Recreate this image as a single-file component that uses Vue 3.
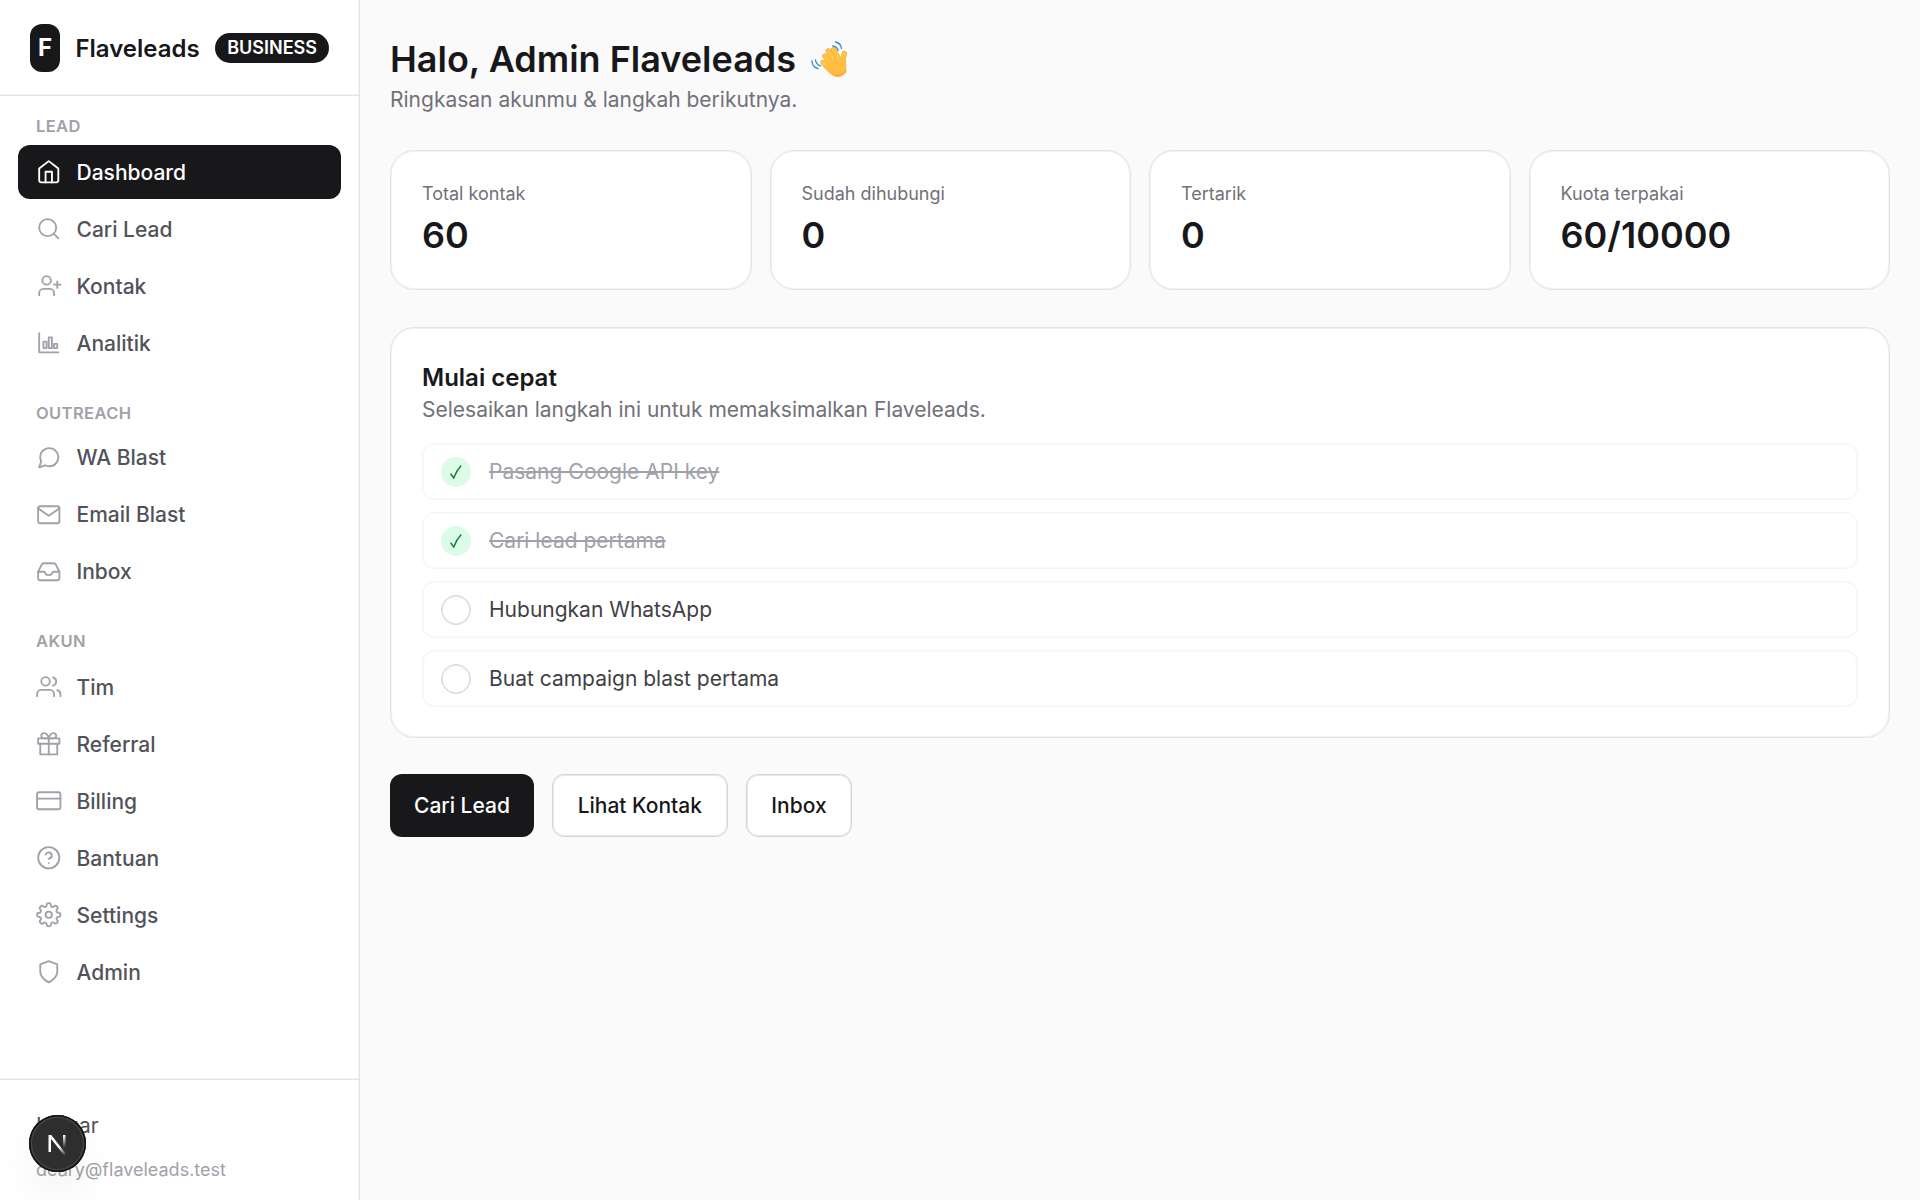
<template>
  <div class="layout">
    <aside class="sidebar">
      <div class="brand">
        <span class="logo">F</span>
        <span class="brandName">Flaveleads</span>
        <span class="plan">BUSINESS</span>
      </div>

      <nav class="nav">
        <div v-for="group in groups" :key="group.label" class="group" :class="group.label.toLowerCase()">
          <p class="groupLabel">{{ group.label }}</p>
          <a v-for="item in group.items" :key="item.name" class="item" :class="{ active: item.name === current }">
            <svg class="icon" viewBox="0 0 24 24">
              <path v-for="d in item.icon" :key="d" :d="d" />
            </svg>
            <span class="itemName">{{ item.name }}</span>
          </a>
        </div>
      </nav>

      <div class="account">
        <span class="logout">Keluar</span>
        <span class="email">deary@flaveleads.test</span>
      </div>
    </aside>

    <main class="main">
      <h1 class="title">
        <span>Halo, Admin Flaveleads</span>
        <svg class="wave" viewBox="0 0 36 36">
          <g v-for="f in fingers" :key="f" class="finger">
            <path :d="f" class="fingerEdge" />
            <path :d="f" />
          </g>
          <path d="M17 23.500C20 18 27 15.500 30 17.500L35 14.500C34.600 17 35.200 19 35.200 22V31C33 34 30 35.700 26.500 35.700C22 35.700 18 32 13.500 26.500z" fill="#ffbe42" />
          <path d="M18 31C22 35 29 35.500 35.200 28V31C33 34 30 35.700 26.500 35.700C23.500 35.700 20.500 34 18 31z" fill="#fbab3e" />
          <path d="M21.500 4.800C24 5 26.300 6.800 27.200 9.500M24.500 1C27.700 1.600 30 4 30.500 7.300M4.500 19C4.800 21.800 6.600 24 9.500 24.800M1 20C1.200 23.800 3.600 26.800 7 27.600" stroke="#2f88cc" stroke-width="1.300" stroke-linecap="round" fill="none" />
        </svg>
      </h1>
      <p class="subtitle">Ringkasan akunmu &amp; langkah berikutnya.</p>

      <div class="stats">
        <div v-for="stat in stats" :key="stat.label" class="card">
          <p class="statLabel">{{ stat.label }}</p>
          <p class="statValue">{{ stat.value }}</p>
        </div>
      </div>

      <section class="card quick">
        <h2 class="quickTitle">Mulai cepat</h2>
        <p class="quickText">Selesaikan langkah ini untuk memaksimalkan Flaveleads.</p>
        <ul class="steps">
          <li v-for="step in steps" :key="step.text" class="step" :class="{ done: step.done }">
            <span class="check">
              <svg v-if="step.done" viewBox="0 0 14 16">
                <path d="M1.600 9.800L4.700 13.900C6.500 9.300 9 5 12.200 1.600" />
              </svg>
            </span>
            <span class="stepText">{{ step.text }}</span>
          </li>
        </ul>
      </section>

      <div class="actions">
        <button class="primary">Cari Lead</button>
        <button>Lihat Kontak</button>
        <button>Inbox</button>
      </div>
    </main>

    <div class="devBadge">
      <svg viewBox="0 0 57 57">
        <defs>
          <linearGradient id="diag" x1="31" y1="31" x2="37.500" y2="40" gradientUnits="userSpaceOnUse">
            <stop stop-color="#fff" />
            <stop offset="1" stop-color="#fff" stop-opacity="0" />
          </linearGradient>
          <linearGradient id="stem" x1="0" y1="20" x2="0" y2="33" gradientUnits="userSpaceOnUse">
            <stop stop-color="#fff" />
            <stop offset="1" stop-color="#fff" stop-opacity="0" />
          </linearGradient>
        </defs>
        <path d="M19.500 20h2.800L37.300 39.300 35.400 40.800 22 23.800V37h-2.500z" fill="url(#diag)" />
        <path d="M34 20h2.500v13.500H34z" fill="url(#stem)" />
      </svg>
    </div>
  </div>
</template>

<script setup>
  import { ref } from "vue";

  const current = ref("Dashboard");

  const groups = [
    {
      label: "LEAD",
      items: [
        { name: "Dashboard", icon: ["M3 9l9-7 9 7v11a2 2 0 0 1-2 2H5a2 2 0 0 1-2-2z", "M9 22V12h6v10"] },
        { name: "Cari Lead", icon: ["M11 3a8 8 0 1 0 0 16 8 8 0 0 0 0-16z", "M21 21l-4.350-4.350"] },
        { name: "Kontak", icon: ["M17 21v-2a4 4 0 0 0-4-4H7a4 4 0 0 0-4 4v2", "M10 3a4 4 0 1 0 0 8 4 4 0 0 0 0-8z", "M20 8v6M23 11h-6"] },
        { name: "Analitik", icon: ["M3 3v18h18", "M7 11h3v6H7z", "M12 7h3v10h-3z", "M17 13h3v4h-3z"] },
      ],
    },
    {
      label: "OUTREACH",
      items: [
        { name: "WA Blast", icon: ["M21 11.500a8.380 8.380 0 0 1-.9 3.800 8.500 8.500 0 0 1-7.600 4.700 8.380 8.380 0 0 1-3.800-.9L3 21l1.900-5.700a8.380 8.380 0 0 1-.9-3.800 8.500 8.500 0 0 1 4.700-7.600 8.380 8.380 0 0 1 3.800-.9h.5a8.480 8.480 0 0 1 8 8v.5z"] },
        { name: "Email Blast", icon: ["M4 4h16a2 2 0 0 1 2 2v12a2 2 0 0 1-2 2H4a2 2 0 0 1-2-2V6a2 2 0 0 1 2-2z", "M22 6l-10 7L2 6"] },
        { name: "Inbox", icon: ["M22 12h-6l-2 3h-4l-2-3H2", "M5.450 5.110L2 12v6a2 2 0 0 0 2 2h16a2 2 0 0 0 2-2v-6l-3.450-6.890A2 2 0 0 0 16.760 4H7.240a2 2 0 0 0-1.790 1.110z"] },
      ],
    },
    {
      label: "AKUN",
      items: [
        { name: "Tim", icon: ["M17 21v-2a4 4 0 0 0-4-4H5a4 4 0 0 0-4 4v2", "M9 3a4 4 0 1 0 0 8 4 4 0 0 0 0-8z", "M23 21v-2a4 4 0 0 0-3-3.870", "M16 3.130a4 4 0 0 1 0 7.750"] },
        { name: "Referral", icon: ["M20 12v10H4V12", "M2 7h20v5H2z", "M12 22V7", "M12 7H7.500a2.500 2.500 0 0 1 0-5C11 2 12 7 12 7z", "M12 7h4.500a2.500 2.500 0 0 0 0-5C13 2 12 7 12 7z"] },
        { name: "Billing", icon: ["M3 4h18a2 2 0 0 1 2 2v12a2 2 0 0 1-2 2H3a2 2 0 0 1-2-2V6a2 2 0 0 1 2-2z", "M1 10h22"] },
        { name: "Bantuan", icon: ["M12 2a10 10 0 1 0 0 20 10 10 0 0 0 0-20z", "M9.090 9a3 3 0 0 1 5.830 1c0 2-3 3-3 3", "M12 17h.01"] },
        { name: "Settings", icon: ["M12 9a3 3 0 1 0 0 6 3 3 0 0 0 0-6z", "M19.400 15a1.650 1.650 0 0 0 .33 1.820l.06.06a2 2 0 0 1-2.830 2.830l-.06-.06a1.650 1.650 0 0 0-1.820-.33 1.650 1.650 0 0 0-1 1.510V21a2 2 0 0 1-4 0v-.09A1.650 1.650 0 0 0 9 19.400a1.650 1.650 0 0 0-1.820.33l-.06.06a2 2 0 0 1-2.830-2.830l.06-.06a1.650 1.650 0 0 0 .33-1.820 1.650 1.650 0 0 0-1.510-1H3a2 2 0 0 1 0-4h.09A1.650 1.650 0 0 0 4.600 9a1.650 1.650 0 0 0-.33-1.820l-.06-.06a2 2 0 0 1 2.830-2.830l.06.06a1.650 1.650 0 0 0 1.820.33H9a1.650 1.650 0 0 0 1-1.510V3a2 2 0 0 1 4 0v.09a1.650 1.650 0 0 0 1 1.510 1.650 1.650 0 0 0 1.820-.33l.06-.06a2 2 0 0 1 2.830 2.830l-.06.06a1.650 1.650 0 0 0-.33 1.820V9a1.650 1.650 0 0 0 1.510 1H21a2 2 0 0 1 0 4h-.09a1.650 1.650 0 0 0-1.510 1z"] },
        { name: "Admin", icon: ["M12 22s8-4 8-10V5l-8-3-8 3v7c0 6 8 10 8 10z"] },
      ],
    },
  ];

  // waving hand, thumb first
  const fingers = [
    "M33.300 12.500L31.500 22",
    "M22.500 8.700L29 20",
    "M17.300 10L25 22",
    "M14 15L21.500 25",
    "M12 21.500L20 30",
  ];

  const stats = [
    { label: "Total kontak", value: "60" },
    { label: "Sudah dihubungi", value: "0" },
    { label: "Tertarik", value: "0" },
    { label: "Kuota terpakai", value: "60/10000" },
  ];

  const steps = [
    { text: "Pasang Google API key", done: true },
    { text: "Cari lead pertama", done: true },
    { text: "Hubungkan WhatsApp", done: false },
    { text: "Buat campaign blast pertama", done: false },
  ];
</script>

<style>
  body {
    margin: 0;
    background: #fafafa;
  }
</style>

<style scoped>
  .layout {
    display: flex;
    height: 1200px;
    overflow: hidden;
    background: #fafafa;
    color: #18181b;
    font-family: Inter, "Liberation Sans", sans-serif;
    font-size: 21px;
    line-height: 30px;
  }

  .layout * {
    box-sizing: border-box;
  }

  h1, h2, p, ul {
    margin: 0;
    padding: 0;
  }

  .sidebar {
    display: flex;
    flex-direction: column;
    flex: none;
    width: 360px;
    background: #fff;
    border-right: 1px solid #e4e4e7;
    box-shadow: inset -1px 0 #f1f1f3;
  }

  .brand {
    display: flex;
    align-items: center;
    gap: 15.5px;
    height: 96px;
    padding: 1px 30px 0;
    border-bottom: 1px solid #e4e4e7;
    box-shadow: inset 0 -1px #f1f1f3;
  }

  .logo {
    width: 30px;
    height: 48px;
    border-radius: 12px;
    background: #18181b;
    color: #fff;
    font-size: 24px;
    font-weight: 700;
    line-height: 48px;
    text-align: center;
  }

  .brandName {
    padding-top: 1px;
    font-size: 24px;
    font-weight: 600;
  }

  .plan {
    height: 30px;
    padding: 0 12px;
    border-radius: 15px;
    background: #18181b;
    color: #fff;
    font-size: 18px;
    font-weight: 600;
    line-height: 30px;
  }

  .nav {
    flex: 1;
    padding: 18px 18px 0;
  }

  .group {
    display: flex;
    flex-direction: column;
    gap: 3px;
    margin-bottom: 31px;
  }

  .groupLabel {
    height: 28px;
    padding-left: 18px;
    color: #a1a1aa;
    font-size: 16.5px;
    font-weight: 600;
    line-height: 24px;
    letter-spacing: 0.4px;
  }

  .item {
    display: flex;
    align-items: center;
    gap: 15px;
    height: 54px;
    padding: 0 18px;
    border-radius: 12px;
    color: #52525b;
    font-weight: 500;
  }

  .itemName {
    padding-top: 2px;
  }

  .active {
    background: #18181b;
    color: #fff;
  }

  .outreach {
    margin-bottom: 30px;
  }

  .outreach .groupLabel {
    height: 27px;
  }

  .outreach .itemName {
    padding-top: 0;
  }

  .icon {
    width: 25.5px;
    height: 25.5px;
    fill: none;
    stroke: #a1a1aa;
    stroke-width: 1.75;
    stroke-linecap: round;
    stroke-linejoin: round;
  }

  .active .icon {
    stroke: #fff;
  }

  .account {
    display: flex;
    flex-direction: column;
    height: 121px;
    padding: 31px 36px 0;
    border-top: 1px solid #e4e4e7;
    box-shadow: 0 -1px #f1f1f3;
  }

  .logout {
    color: #52525b;
  }

  .email {
    margin-top: 17px;
    color: #a1a1aa;
    font-size: 18px;
    line-height: 24px;
  }

  .main {
    flex: 1;
    padding: 35px 30px;
  }

  .title {
    display: flex;
    align-items: center;
    gap: 15px;
    height: 48px;
    font-size: 36px;
    font-weight: 600;
    line-height: 48px;
  }

  .wave {
    width: 36px;
    height: 36px;
  }

  .finger {
    fill: none;
    stroke: #ffc544;
    stroke-width: 4.2;
    stroke-linecap: round;
  }

  .fingerEdge {
    stroke: #eda234;
    stroke-width: 5.2;
  }

  .subtitle, .quickText {
    color: #71717a;
  }

  .subtitle {
    margin-top: 2px;
  }

  .stats {
    display: grid;
    grid-template-columns: repeat(4, 1fr);
    gap: 18px;
    margin-top: 35px;
  }

  .card {
    padding: 31px 31px 30px;
    border: 1px solid #e4e4e7;
    border-radius: 24px;
    background: #fff;
    box-shadow: inset 0 0 0 1px #f1f1f3;
  }

  .statLabel {
    color: #71717a;
    font-size: 18px;
    line-height: 24px;
  }

  .statValue {
    margin-top: 5px;
    font-size: 36px;
    font-weight: 600;
    line-height: 48px;
  }

  .quick {
    margin-top: 37px;
    padding-top: 33px;
  }

  .quickTitle {
    font-size: 24px;
    font-weight: 600;
    line-height: 34px;
  }

  .steps {
    display: flex;
    flex-direction: column;
    gap: 12px;
    margin-top: 18px;
    list-style: none;
  }

  .step {
    display: flex;
    align-items: center;
    gap: 18px;
    height: 57px;
    padding: 0 18px;
    border: 1px solid #f4f4f5;
    border-radius: 12px;
    box-shadow: inset 0 0 0 1px #fafafa;
    color: #3f3f46;
  }

  .check {
    display: flex;
    align-items: center;
    justify-content: center;
    width: 30px;
    height: 30px;
    border: 1px solid #d4d4d8;
    border-radius: 50%;
    box-shadow: inset 0 0 0 1px #eaeaec;
  }

  .done .check {
    border: none;
    background: #dcfce7;
    box-shadow: none;
  }

  .check svg {
    width: 14px;
    height: 16px;
    fill: none;
    stroke: #15803d;
    stroke-width: 1.5;
  }

  .done .stepText {
    color: #a1a1aa;
    text-decoration: line-through;
  }

  .actions {
    display: flex;
    gap: 18px;
    margin-top: 36px;
  }

  button {
    height: 63px;
    padding: 0 24.7px;
    border: 1px solid #d4d4d8;
    border-radius: 12px;
    background: #fff;
    box-shadow: inset 0 0 0 1px #eaeaec;
    color: #18181b;
    font: inherit;
    font-weight: 500;
  }

  .primary {
    padding: 0 24px;
    border: none;
    background: #18181b;
    box-shadow: none;
    color: #fff;
  }

  /* floats over the account block */
  .devBadge {
    position: absolute;
    left: 28.5px;
    top: 1114.5px;
    width: 57px;
    height: 57px;
    border-radius: 50%;
    background: #2e2e2e;
    box-shadow: inset 0 0 0 1.5px #111, inset 0 0 0 3px #444, 0 24px 48px -12px rgba(0, 0, 0, 0.14);
  }
</style>
